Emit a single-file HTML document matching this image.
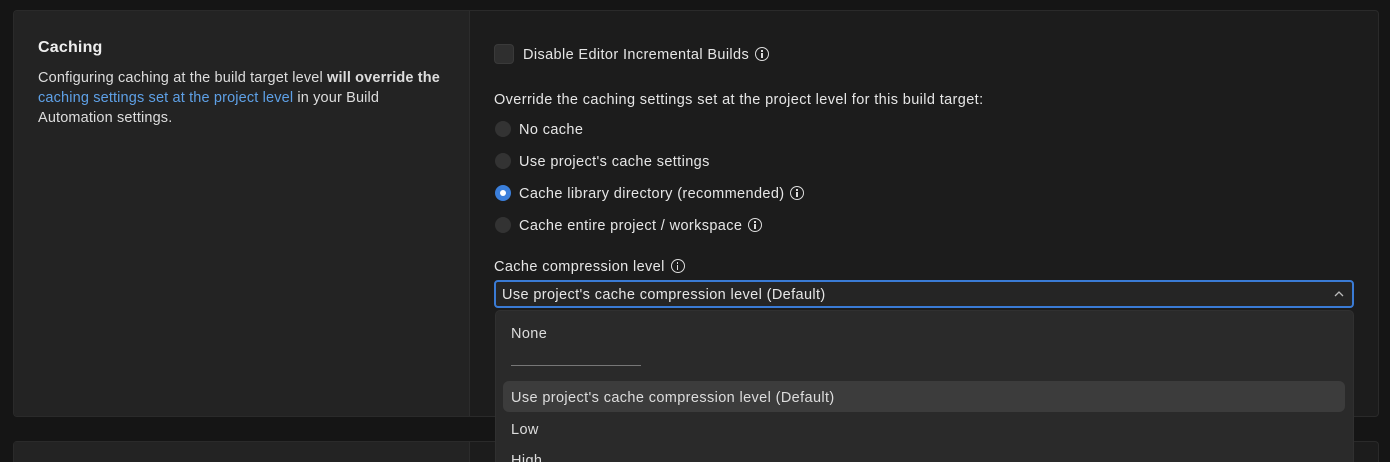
<!DOCTYPE html>
<html><head><style>
*{box-sizing:border-box;margin:0;padding:0}
html,body{width:1390px;height:462px;overflow:hidden}
body{background:#151515;font-family:"Liberation Sans",sans-serif;color:#e6e6e6;position:relative;font-size:14.5px;letter-spacing:0.38px}
.card{position:absolute;left:13px;top:10px;width:1366px;height:407px;border:1px solid #2a2a2a;border-radius:4px;background:#1c1c1c;overflow:hidden}
.left{position:absolute;left:0;top:0;width:456px;height:100%;background:#232323;border-right:1px solid #2c2c2c}
.card2{position:absolute;left:13px;top:441px;width:1366px;height:21px;border:1px solid #2a2a2a;border-bottom:none;border-radius:4px 4px 0 0;background:#1c1c1c}
.card2 .left{height:100%}
.a{position:absolute;white-space:nowrap}
.info{display:inline-block;width:14px;height:14px;border:1.3px solid #ddd;border-radius:50%;vertical-align:-2px;margin-left:6px;position:relative}
.info:before{content:"";position:absolute;left:5px;top:5px;width:1.4px;height:4.5px;background:#ddd}
.info:after{content:"";position:absolute;left:5px;top:2.3px;width:1.5px;height:1.5px;background:#ddd}
.radio{position:absolute;width:16px;height:16px;border-radius:50%;background:#333;left:495px}
.lbl{left:519px}
</style></head><body>
<div class="card"><div class="left"></div></div>
<div class="card2"><div class="left"></div></div>
<div class="a" style="left:38px;top:39px;font-size:16px;font-weight:bold;color:#eee;letter-spacing:0.2px">Caching</div>
<div class="a" style="left:38px;top:68px;line-height:20px;white-space:normal;width:408px;color:#ddd;letter-spacing:0.15px">Configuring caching at the build target level <b>will override the</b> <span style="color:#5ea0e6">caching settings set at the project level</span> in your Build Automation settings.</div>
<div style="position:absolute;left:494px;top:44px;width:20px;height:20px;border-radius:4px;background:#2f2f2f;border:1px solid #3a3a3a"></div>
<div class="a" style="left:523px;top:47px">Disable Editor Incremental Builds<span class="info"></span></div>
<div class="a" style="left:494px;top:92px">Override the caching settings set at the project level for this build target:</div>
<div class="radio" style="top:121px"></div><div class="a lbl" style="top:122px">No cache</div>
<div class="radio" style="top:153px"></div><div class="a lbl" style="top:154px">Use project's cache settings</div>
<div class="radio" style="top:185px;background:#3b7fdb"><div style="position:absolute;left:5px;top:5px;width:6px;height:6px;border-radius:50%;background:#fff"></div></div><div class="a lbl" style="top:186px">Cache library directory (recommended)<span class="info"></span></div>
<div class="radio" style="top:217px"></div><div class="a lbl" style="top:218px">Cache entire project / workspace<span class="info"></span></div>
<div class="a" style="left:494px;top:259px">Cache compression level<span class="info"></span></div>
<div style="position:absolute;left:494px;top:280px;width:860px;height:28px;border:2px solid #3a7bd5;border-radius:4px;background:#252525"></div>
<div class="a" style="left:502px;top:287px">Use project's cache compression level (Default)</div>
<svg style="position:absolute;left:1333px;top:289px" width="12" height="10"><path d="M2 7 L6 3 L10 7" stroke="#bbb" stroke-width="1.3" fill="none"/></svg>
<div style="position:absolute;left:495px;top:310px;width:859px;height:152px;background:#2a2a2a;border-radius:5px 5px 0 0;border:1px solid #303030;border-bottom:none"></div>
<div class="a" style="left:511px;top:326px;color:#ddd">None</div>
<div style="position:absolute;left:511px;top:365px;width:130px;height:1px;background:#777"></div>
<div style="position:absolute;left:503px;top:381px;width:842px;height:31px;background:#3c3c3c;border-radius:6px"></div>
<div class="a" style="left:511px;top:390px;color:#ddd">Use project's cache compression level (Default)</div>
<div class="a" style="left:511px;top:422px;color:#ddd">Low</div>
<div class="a" style="left:511px;top:453px;color:#ddd">High</div>
</body></html>
